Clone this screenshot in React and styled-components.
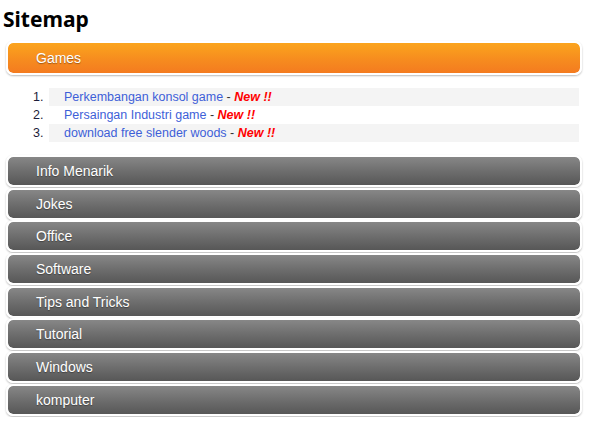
import React from "react";
import styled, { createGlobalStyle } from "styled-components";

const Global = createGlobalStyle`
  html, body { margin: 0; padding: 0; background: #fff; }
  body { font-family: "Liberation Sans", Arial, sans-serif; }
`;

const Page = styled.div`
  width: 590px;
  padding-top: 5px;
`;

const Title = styled.h1`
  margin: 0 0 8px 3px;
  font-family: "Noto Sans", "DejaVu Sans", sans-serif;
  font-weight: 700;
  font-size: 21px;
  line-height: 28px;
  color: #000;
`;

const Section = styled.div`
  margin: 0 8px 0 6px;
`;

const Bar = styled.div`
  border: 2px solid #fff;
  border-radius: 7px;
  box-shadow: 0 1px 2px rgba(0, 0, 0, 0.28);
  margin-bottom: ${(p) => (p.$active ? "13px" : "0.7px")};
  height: ${(p) => (p.$active ? "30px" : "28px")};
  padding-left: 28px;
  display: flex;
  align-items: center;
  color: #fff;
  font-size: 14px;
  text-shadow: 0 1px 1px rgba(0, 0, 0, 0.35);
  background: ${(p) =>
    p.$active
      ? "linear-gradient(to bottom, #fba41d 0%, #f68a1f 60%, #f47b20 100%)"
      : "linear-gradient(to bottom, #878787 0%, #6e6e6e 50%, #575757 100%)"};
  background-clip: padding-box;
`;

const List = styled.ol`
  list-style: none;
  margin: 0 0 13px 0;
  padding: 0;
`;

const Item = styled.li`
  display: grid;
  grid-template-columns: 27px 16px 1fr;
  height: 18px;
  line-height: 18px;
  font-size: 12.5px;
  margin-right: 3px;
`;

const Num = styled.span`
  grid-column: 2;
  color: #1c1c3a;
`;

const Entry = styled.span`
  grid-column: 3;
  padding-left: 15px;
  background: ${(p) => (p.$odd ? "#f4f4f4" : "transparent")};
  color: #333;
  white-space: nowrap;
`;

const Link = styled.a`
  color: #3e5fd8;
  text-decoration: none;
`;

const New = styled.b`
  color: #ff0000;
  font-style: italic;
  font-weight: 700;
`;

const posts = [
  "Perkembangan konsol game",
  "Persaingan Industri game",
  "download free slender woods",
];

const cats = [
  "Info Menarik",
  "Jokes",
  "Office",
  "Software",
  "Tips and Tricks",
  "Tutorial",
  "Windows",
  "komputer",
];

export default function App() {
  return (
    <Page>
      <Global />
      <Title>Sitemap</Title>
      <Section>
        <Bar $active>Games</Bar>
        <List>
          {posts.map((t, i) => (
            <Item key={t}>
              <Num>{i + 1}.</Num>
              <Entry $odd={i % 2 === 0}>
                <Link href="#">{t}</Link> - <New>New !!</New>
              </Entry>
            </Item>
          ))}
        </List>
        {cats.map((c) => (
          <Bar key={c}>{c}</Bar>
        ))}
      </Section>
    </Page>
  );
}
